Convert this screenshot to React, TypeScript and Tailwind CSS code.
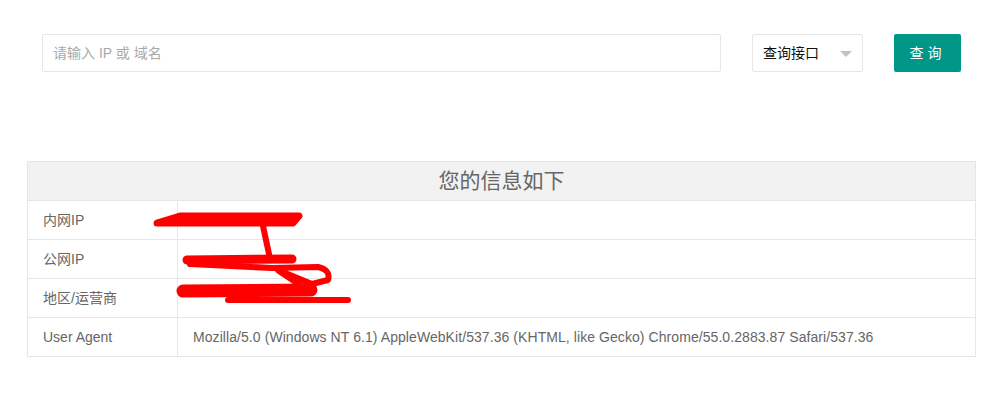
import React from "react";

const rows = [
  { label: "内网IP", value: "" },
  { label: "公网IP", value: "" },
  { label: "地区/运营商", value: "" },
  {
    label: "User Agent",
    value:
      "Mozilla/5.0 (Windows NT 6.1) AppleWebKit/537.36 (KHTML, like Gecko) Chrome/55.0.2883.87 Safari/537.36",
  },
];

// red pen marks covering the private values
function Scribbles() {
  return (
    <svg
      className="pointer-events-none absolute left-0 top-0"
      width="1006"
      height="393"
      viewBox="0 0 1006 393"
      fill="none"
      stroke="#ff0000"
      strokeLinecap="round"
      strokeLinejoin="round"
    >
      <path d="M157 223 L180 216 L299 216 L293 223 L160 223 Z" fill="#ff0000" strokeWidth="7" />
      <path d="M263 226 L269 254" strokeWidth="6" />
      <path d="M187 260 L292 259" strokeWidth="9" />
      <path d="M190 264 L272 268 L318 267 Q331 270 328 280 L312 284 L278 270" strokeWidth="6" />
      <path d="M279 271 L312 293" strokeWidth="6" />
      <path d="M183 291 L311 290" strokeWidth="13" />
      <path d="M228 300 L348 300" strokeWidth="6" />
    </svg>
  );
}

export default function App() {
  return (
    <div
      className="relative h-[393px] w-full bg-white pl-[27px] pr-[30px] pt-[34px] text-[14px] text-[#666]"
      style={{ fontFamily: '"Liberation Sans", Arial, "Noto Sans CJK SC", sans-serif' }}
    >
      <div className="flex items-center gap-[31px] px-[15px]">
        <input
          type="text"
          placeholder="请输入 IP 或 域名"
          className="h-[38px] min-w-0 flex-1 rounded-[2px] border border-[#e6e6e6] px-[10px] text-[14px] text-[#333] placeholder:text-[#a9a9a9] focus:outline-none"
        />
        <div className="relative flex h-[38px] w-[111px] shrink-0 items-center rounded-[2px] border border-[#e6e6e6] px-[10px] text-[14px] text-[#111]">
          查询接口
          <span className="absolute right-[10px] top-[16px] h-0 w-0 border-x-[6px] border-t-[6px] border-x-transparent border-t-[#c2c2c2]" />
        </div>
        <button
          type="button"
          className="h-[38px] w-[67px] shrink-0 rounded-[2px] bg-[#009688] text-[14px] tracking-[4px] text-white"
        >
          查询
        </button>
      </div>

      <table className="mt-[89px] w-full border-collapse border border-[#e6e6e6]">
        <thead>
          <tr>
            <th
              colSpan={2}
              className="h-[39px] border border-[#e6e6e6] bg-[#f2f2f2] text-center text-[21px] font-normal text-[#666]"
            >
              您的信息如下
            </th>
          </tr>
        </thead>
        <tbody>
          {rows.map((r) => (
            <tr key={r.label}>
              <td className="h-[39px] w-[150px] border border-[#e6e6e6] px-[15px]">{r.label}</td>
              <td className="h-[39px] border border-[#e6e6e6] px-[15px] tracking-[0.07px]">{r.value}</td>
            </tr>
          ))}
        </tbody>
      </table>

      <Scribbles />
    </div>
  );
}
